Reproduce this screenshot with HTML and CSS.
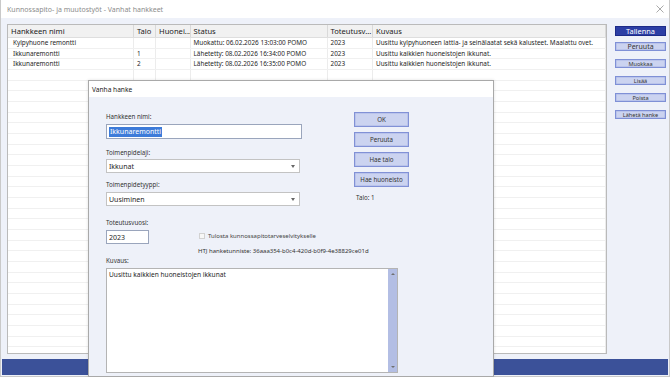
FILE: index.html
```html
<!DOCTYPE html>
<html lang="fi">
  <head>
    <meta charset="UTF-8" />
    <meta name="viewport" content="width=device-width, initial-scale=1.0" />
    <title>Kunnossapito- ja muutostyöt - Vanhat hankkeet</title>
    <link rel="stylesheet" href="styles.css">
  </head>
  <body>
    <div class="window">
      <!-- Title bar -->
      <div class="titlebar">
        <span class="title">Kunnossapito- ja muutostyöt - Vanhat hankkeet</span>
        <svg class="close" width="8" height="8" viewBox="0 0 8 8">
          <line x1="0.5" y1="0.5" x2="7.5" y2="7.5" />
          <line x1="7.5" y1="0.5" x2="0.5" y2="7.5" />
        </svg>
      </div>

      <div class="client">
        <div class="main">
          <!-- Project list -->
          <div class="grid">
            <div class="row head">
              <div class="cell">Hankkeen nimi</div>
              <div class="cell">Talo</div>
              <div class="cell">Huonei...</div>
              <div class="cell">Status</div>
              <div class="cell">Toteutusv...</div>
              <div class="cell">Kuvaus</div>
            </div>
            <div class="row">
              <div class="cell name">Kylpyhuone remontti</div>
              <div class="cell"></div>
              <div class="cell"></div>
              <div class="cell">Muokattu: 06.02.2026 13:03:00 POMO</div>
              <div class="cell">2023</div>
              <div class="cell">Uusittu kylpyhuoneen lattia- ja seinälaatat sekä kalusteet. Maalattu ovet.</div>
            </div>
            <div class="row">
              <div class="cell name">Ikkunaremontti</div>
              <div class="cell">1</div>
              <div class="cell"></div>
              <div class="cell">Lähetetty: 08.02.2026 16:34:00 POMO</div>
              <div class="cell">2023</div>
              <div class="cell">Uusittu kaikkien huoneistojen ikkunat.</div>
            </div>
            <div class="row">
              <div class="cell name">Ikkunaremontti</div>
              <div class="cell">2</div>
              <div class="cell"></div>
              <div class="cell">Lähetetty: 08.02.2026 16:35:00 POMO</div>
              <div class="cell">2023</div>
              <div class="cell">Uusittu kaikkien huoneistojen ikkunat.</div>
            </div>
            <div class="row filler">
              <div class="cell"></div>
              <div class="cell"></div>
              <div class="cell"></div>
              <div class="cell"></div>
              <div class="cell"></div>
              <div class="cell"></div>
            </div>
          </div>

          <!-- Side buttons -->
          <div class="side">
            <div class="btn primary">Tallenna</div>
            <div class="btn large">Peruuta</div>
            <div class="btn">Muokkaa</div>
            <div class="btn">Lisää</div>
            <div class="btn">Poista</div>
            <div class="btn">Lähetä hanke</div>
          </div>
        </div>
        <div class="statusbar"></div>
      </div>

      <!-- Edit dialog -->
      <div class="dialog">
        <div class="dlg-title">Vanha hanke</div>
        <div class="dlg-body">
          <div class="dlg-top">
            <div class="form-col">
              <div class="label">Hankkeen nimi:</div>
              <div class="field text"><span class="selected">Ikkunaremontti</span></div>
              <div class="label next">Toimenpidelaji:</div>
              <div class="field select first">Ikkunat<span class="arrow"></span></div>
              <div class="label next2">Toimenpidetyyppi:</div>
              <div class="field select">Uusiminen<span class="arrow"></span></div>
            </div>
            <div class="btn-col">
              <div class="dlg-btn">OK</div>
              <div class="dlg-btn">Peruuta</div>
              <div class="dlg-btn">Hae talo</div>
              <div class="dlg-btn">Hae huoneisto</div>
              <div class="talo">Talo: 1</div>
            </div>
          </div>

          <div class="dlg-mid">
            <div class="year-col">
              <div class="label">Toteutusvuosi:</div>
              <div class="field year">2023</div>
            </div>
            <div class="info-col">
              <div class="check-row">
                <span class="checkbox"></span>
                <span>Tulosta kunnossapitotarveselvitykselle</span>
              </div>
              <div class="htj">HTJ hanketunniste: 36aaa354-b0c4-420d-b0f9-4e38829ce01d</div>
            </div>
          </div>

          <div class="label">Kuvaus:</div>
          <div class="textarea">
            <div class="ta-text">Uusittu kaikkien huoneistojen ikkunat</div>
            <div class="scrollbar">
              <span class="up"></span>
              <span class="down"></span>
            </div>
          </div>
        </div>
      </div>
    </div>
  </body>
</html>
```

FILE: styles.css
```css
* {
  box-sizing: border-box;
}

body {
  margin: 0;
  width: 670px;
  height: 377px;
  overflow: hidden;
  font-family: "Noto Sans", "Open Sans", sans-serif;
  color: #1e1e1e;
  background: #ffffff;
}

.window {
  position: relative;
  width: 670px;
  height: 377px;
  border: 1px solid #c9c9c9;
  border-top: 0;
  display: flex;
  flex-direction: column;
  background: #eef1f9;
}

/* Title bar */
.titlebar {
  height: 18px;
  flex: none;
  background: #ffffff;
  display: flex;
  align-items: center;
  justify-content: space-between;
  padding: 0 5px 0 6px;
}

.title {
  font-size: 7px;
  color: #8c8c8c;
}

.close {
  display: block;
  stroke: #a0a0a0;
  stroke-width: 0.9;
}

.client {
  flex: 1;
  padding: 6px 0 0 6px;
  display: flex;
  flex-direction: column;
}

.main {
  display: flex;
  height: 330px;
}

/* Grid */
.grid {
  width: 600px;
  border: 1px solid #bababa;
  background: #ffffff;
  display: flex;
  flex-direction: column;
  overflow: hidden;
}

.row {
  display: grid;
  grid-template-columns: 126px 22px 34.5px 137px 45.5px 1fr;
  height: 10.67px;
  flex: none;
  border-bottom: 1px solid #f0f0f0;
  font-size: 6.4px;
  line-height: 9.67px;
}

.cell {
  padding-left: 3px;
  border-right: 1px solid #ececec;
  white-space: nowrap;
  overflow: hidden;
}

.cell.name {
  padding-left: 5px;
}

.row.head {
  height: 13px;
  background: #f1f1f1;
  border-bottom: 1px solid #dedede;
  font-size: 7.6px;
  line-height: 12px;
  color: #222222;
}

.row.head .cell {
  border-right-color: #d9d9d9;
}

.row.filler {
  flex: 1;
  border-bottom: 0;
  background: repeating-linear-gradient(
    to bottom,
    transparent 0,
    transparent 9.67px,
    #f0f0f0 9.67px,
    #f0f0f0 10.67px
  );
}

/* Side buttons */
.side {
  margin-left: 8px;
  width: 51px;
  display: flex;
  flex-direction: column;
  gap: 8px;
  padding-top: 2px;
}

.btn {
  height: 9px;
  background: #cbd3f0;
  border: 1px solid #7f90d6;
  box-shadow: inset 0 0 0 0.5px #a9b5e6;
  font-size: 5.6px;
  color: #333333;
  display: flex;
  align-items: center;
  justify-content: center;
}

.btn.primary {
  height: 10px;
  margin-bottom: -2px;
  background: #2c3ea5;
  border-color: #1d2b88;
  box-shadow: none;
  color: #ffffff;
  font-size: 7.4px;
}

.btn.large {
  font-size: 7px;
}

.statusbar {
  height: 16px;
  margin: 5px 1px 0 -5px;
  background: #3b5199;
}

/* Dialog */
.dialog {
  position: absolute;
  left: 87px;
  top: 80px;
  width: 406px;
  height: 297px;
  border: 1px solid #a9a9a9;
  background: #eef1f9;
  box-shadow: 0 0 3px rgba(0, 0, 0, 0.12);
}

.dlg-title {
  height: 16px;
  background: #ffffff;
  font-size: 6.6px;
  padding-left: 3px;
  display: flex;
  align-items: center;
  color: #222222;
}

.dlg-body {
  padding-left: 17px;
}

.dlg-top {
  display: flex;
}

.form-col {
  width: 196px;
  padding-top: 15px;
}

.label {
  height: 10px;
  line-height: 10px;
  font-size: 6.2px;
  color: #333333;
}

.label.next {
  margin-top: 9px;
}

.label.next2 {
  margin-top: 7px;
}

.field {
  margin-top: 2px;
  background: #ffffff;
  border: 1px solid #9aa5bc;
  font-size: 7px;
  display: flex;
  align-items: center;
  padding-left: 2px;
}

.field.text {
  height: 15px;
}

.selected {
  background: #3d7bd9;
  color: #ffffff;
  line-height: 10px;
  padding: 0 1px;
}

.field.select {
  width: 194px;
  height: 14px;
  border-color: #c3c3c3;
  justify-content: space-between;
  padding-right: 4px;
}

.field.select.first {
  margin-top: 1px;
}

.arrow {
  width: 0;
  height: 0;
  border-left: 2.5px solid transparent;
  border-right: 2.5px solid transparent;
  border-top: 3px solid #666666;
}

.btn-col {
  margin-left: 52px;
  padding-top: 15px;
  display: flex;
  flex-direction: column;
  gap: 5px;
}

.dlg-btn {
  width: 55px;
  height: 15px;
  background: #cbd3f0;
  border: 1px solid #8191d6;
  box-shadow: inset 0 0 0 0.5px #a9b5e6;
  font-size: 6.2px;
  color: #333333;
  display: flex;
  align-items: center;
  justify-content: center;
}

.talo {
  margin-top: 1px;
  padding-left: 2px;
  height: 10px;
  line-height: 10px;
  font-size: 6.2px;
  color: #333333;
}

.dlg-mid {
  display: flex;
  margin-top: 12px;
}

.year-col {
  width: 92px;
}

.field.year {
  width: 43px;
  height: 14px;
}

.info-col {
  padding-top: 13px;
  font-size: 6px;
  color: #333333;
}

.check-row {
  height: 10px;
  display: flex;
  align-items: center;
  gap: 3px;
  color: #444444;
}

.checkbox {
  width: 6px;
  height: 6px;
  margin-left: 1px;
  border: 1px solid #d2d2d2;
  background: #f7f7f7;
}

.htj {
  margin-top: 6px;
  height: 9px;
  line-height: 9px;
}

.textarea {
  margin-top: 2px;
  width: 292px;
  height: 105px;
  background: #ffffff;
  border: 1px solid #b4b4b4;
  display: flex;
  justify-content: space-between;
}

.ta-text {
  padding: 1px 0 0 2px;
  font-size: 6.6px;
  line-height: 10px;
}

.scrollbar {
  width: 9px;
  background: #b3bee4;
  display: flex;
  flex-direction: column;
  justify-content: space-between;
  align-items: center;
  padding: 4px 0;
}

.up,
.down {
  width: 0;
  height: 0;
  border-left: 2px solid transparent;
  border-right: 2px solid transparent;
}

.up {
  border-bottom: 2.5px solid #707070;
}

.down {
  border-top: 2.5px solid #707070;
}
```
